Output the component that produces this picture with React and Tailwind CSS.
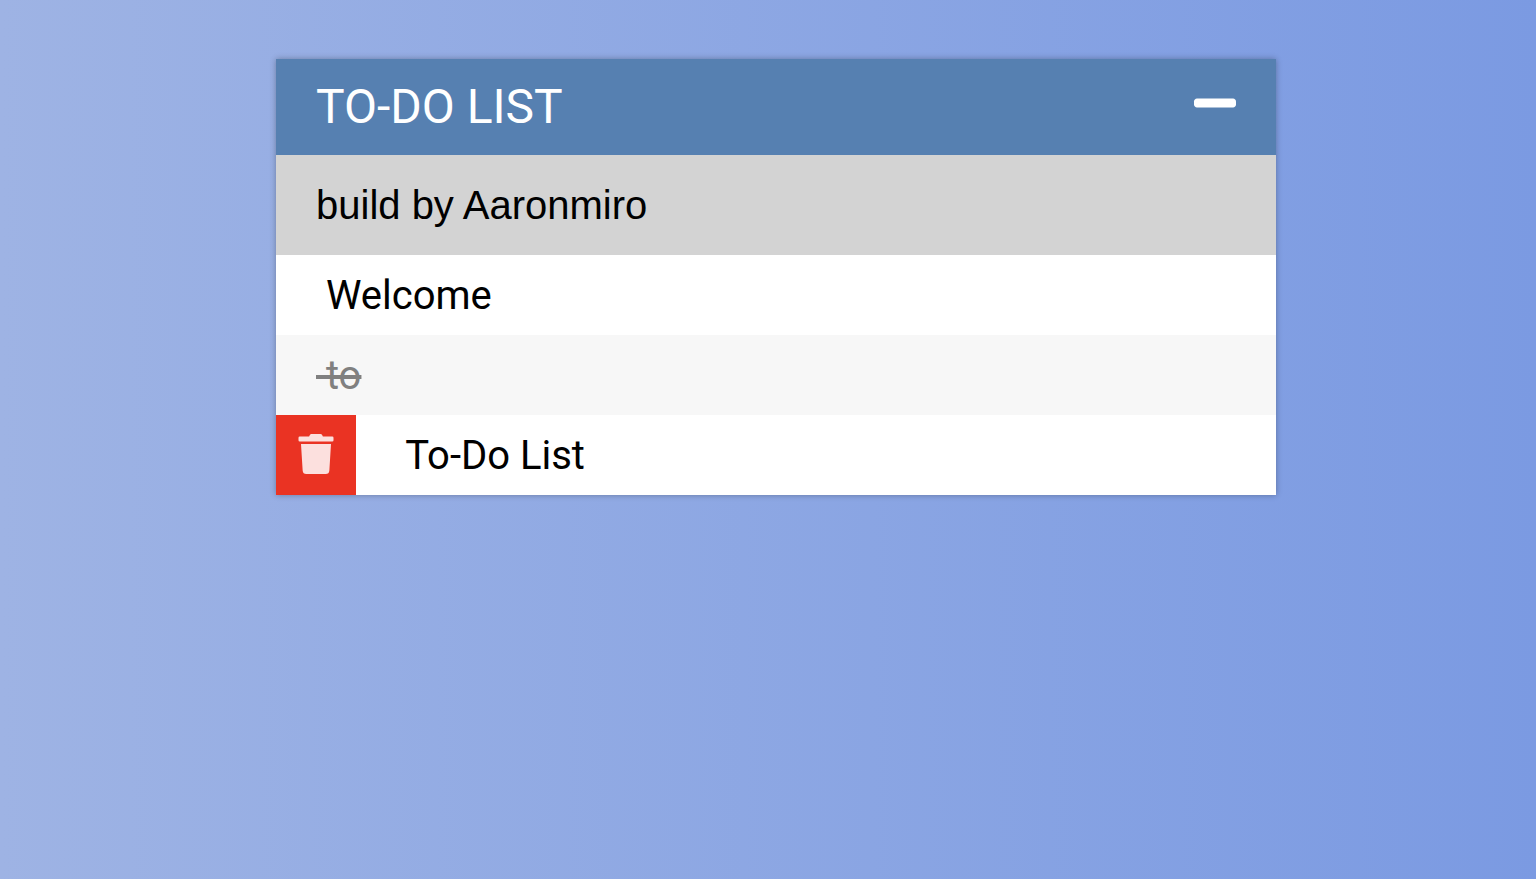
import { FaTrash, FaMinus } from 'react-icons/fa';

const todos = [
  { text: 'Welcome', done: false, active: false },
  { text: 'to', done: true, active: false },
  { text: 'To-Do List', done: false, active: true },
];

export default function App() {
  return (
    <div className="min-h-screen bg-linear-to-r from-[#9eb3e4] to-[#7b9ae2] pt-[59px] pr-4 pl-8 font-[Roboto,sans-serif]">
      <main className="mx-auto w-full max-w-[1000px] bg-[#f7f7f7] shadow-[0_0_6px_rgba(0,0,0,0.3)]">
        <header className="flex h-24 items-center justify-between bg-[#5680b1] px-10 text-white">
          <h1 className="text-5xl font-normal">TO-DO LIST</h1>
          <button type="button" aria-label="Hide new to-do field" className="flex w-[42px] justify-center pb-2">
            <FaMinus className="size-12 shrink-0" />
          </button>
        </header>
        <input
          type="text"
          aria-label="New to-do"
          defaultValue="build by Aaronmiro"
          className="block h-[100px] w-full bg-[#d3d3d3] px-10 font-['Liberation_Sans',Arial,sans-serif] text-[40px] text-black outline-none"
        />
        <ul>
          {todos.map((todo) => (
            <li key={todo.text} className="flex h-20 bg-white text-[40px] leading-[81px] text-black even:bg-[#f7f7f7]">
              {todo.active && (
                <button type="button" aria-label="Delete to-do" className="flex size-20 items-center justify-center bg-[#ea3323] pb-0.5 text-white/85">
                  <FaTrash className="size-10" />
                </button>
              )}
              <span className={todo.done ? 'pl-10 whitespace-pre text-[#808080] line-through' : 'pl-10 whitespace-pre'}>
                {' ' + todo.text}
              </span>
            </li>
          ))}
        </ul>
      </main>
    </div>
  );
}
